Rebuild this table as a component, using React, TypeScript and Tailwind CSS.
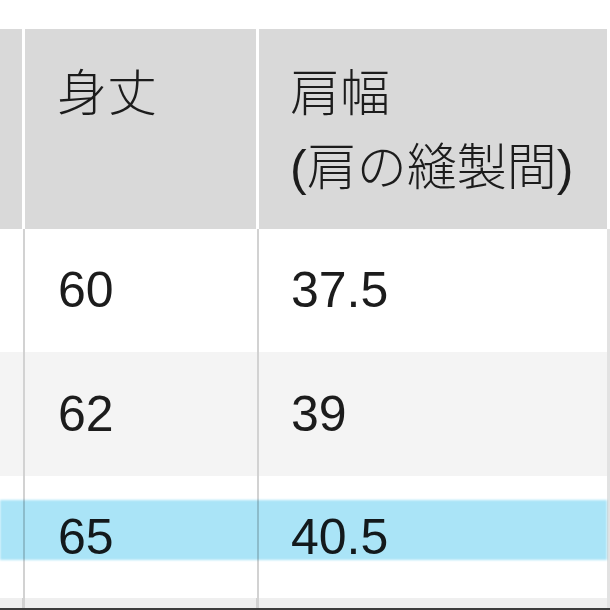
import React from "react";

const font = {
  fontFamily: '"Liberation Sans", "Noto Sans CJK JP", sans-serif',
};

function BodyRow({
  h,
  bg,
  a,
  b,
}: {
  h: string;
  bg: string;
  a: string;
  b: string;
}) {
  return (
    <div className={`flex ${h} ${bg}`}>
      <div className="w-[22px]" />
      <div className="w-[3px] flex justify-center">
        <div className="w-[2px] bg-[#d2d2d2]" />
      </div>
      <div className="w-[231px] flex items-center pl-[33px]">{a}</div>
      <div className="w-[3px] flex justify-center">
        <div className="w-[2px] bg-[#d2d2d2]" />
      </div>
      <div className="w-[348px] flex items-center pl-[32px]">{b}</div>
      <div className="w-[3px] bg-[#e2e2e2]" />
    </div>
  );
}

export default function App() {
  return (
    <div
      className="w-[610px] h-[610px] bg-white overflow-hidden relative text-[50px] font-light text-[#1c1c1c]"
      style={font}
    >
      <div className="h-[29px]" />
      {/* header */}
      <div className="flex h-[200px]">
        <div className="w-[22px] bg-[#d9d9d9]" />
        <div className="w-[3px] bg-white" />
        <div className="w-[231px] bg-[#d9d9d9] pl-[32px] pt-[28px] leading-[74px]">
          身丈
        </div>
        <div className="w-[3px] bg-white" />
        <div className="w-[348px] bg-[#d9d9d9] pl-[31px] pt-[28px] leading-[74px] whitespace-nowrap">
          <div>肩幅</div>
          <div>(肩の縫製間)</div>
        </div>
        <div className="w-[3px] bg-white" />
      </div>
      <BodyRow h="h-[123px]" bg="bg-white" a="60" b="37.5" />
      <BodyRow h="h-[124px]" bg="bg-[#f4f4f4]" a="62" b="39" />
      <BodyRow h="h-[122px]" bg="bg-white" a="65" b="40.5" />
      <div className="flex h-[10px]">
        <div className="w-[22px] bg-[#efefef]" />
        <div className="w-[3px] bg-[#d2d2d2]" />
        <div className="w-[231px] bg-[#efefef]" />
        <div className="w-[3px] bg-[#d2d2d2]" />
        <div className="w-[348px] bg-[#efefef]" />
        <div className="w-[3px] bg-[#e2e2e2]" />
      </div>
      <div className="h-[2px] bg-[#3c3c3c]" />
      {/* highlighter band */}
      <div className="absolute left-0 right-[3px] top-[500px] h-[60px] bg-[#aae4f7] mix-blend-multiply blur-[1px]" />
    </div>
  );
}
